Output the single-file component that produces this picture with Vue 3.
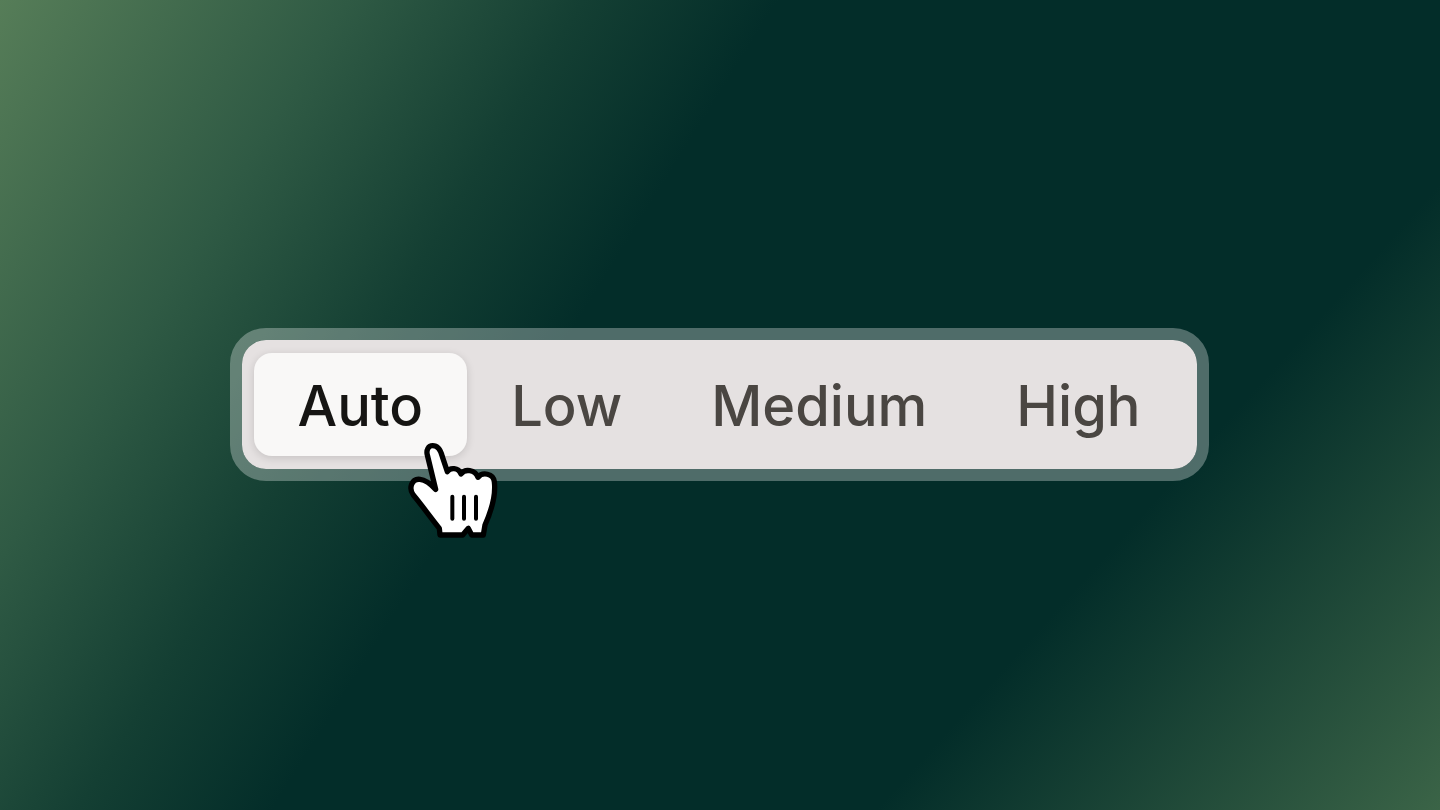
<script setup>
const options = ['Auto', 'Low', 'Medium', 'High']
const active = 'Auto'
</script>

<template>
  <main class="stage">
    <div class="shell">
      <div class="track">
        <button v-for="o in options" :key="o" class="opt" :class="{ on: o === active }">{{ o }}</button>
      </div>
      <svg class="hand" viewBox="0 0 360 345" width="120" height="115">
        <path class="hand-fill" d="M128 47 C145 47 152 60 157 80 L172 125 C180 112 205 112 213 132 C224 116 255 118 264 142 C277 125 310 130 313 155 C318 195 305 240 285 285 L280 315 L245 315 L235 295 L218 315 L150 315 L148 295 C120 260 95 225 70 195 C55 175 65 145 90 148 C110 150 125 165 137 178 L112 75 C108 60 115 47 128 47 Z"/>
        <path class="hand-line" d="M187 200 L187 266 M222 200 L222 266 M258 200 L258 266"/>
      </svg>
    </div>
  </main>
</template>

<style scoped>
.stage {
  width: 1440px;
  height: 810px;
  display: flex;
  align-items: center;
  justify-content: center;
  background:
    linear-gradient(132deg, rgba(59, 100, 71, 0) 74%, rgba(59, 100, 71, 1) 100%),
    linear-gradient(122deg, #567d58 0%, #2f5a44 18%, #143f33 30%, #032d29 40%);
  overflow: hidden;
}
.shell {
  position: relative;
  margin-left: -1px;
  margin-top: -1px;
  border: 12px solid rgba(255, 255, 255, 0.3);
  border-radius: 36px;
  background-clip: padding-box;
}
.track {
  display: flex;
  padding: 13px 12px;
  background: #e5e1e1;
  border-radius: 24px;
}
.opt {
  border: 0;
  background: none;
  padding: 2px 44.5px 0;
  height: 103px;
  font: 500 56px "Inter", sans-serif;
  color: #4a4642;
  border-radius: 18px;
}
.opt.on {
  padding: 2px 43.5px 0;
  color: #161513;
  background: #f9f8f7;
  box-shadow: 0 2px 8px rgba(0, 0, 0, 0.14);
}
.hand {
  position: absolute;
  left: 148px;
  top: 90px;
}
.hand-fill {
  fill: #fff;
  stroke: #000;
  stroke-width: 16;
  stroke-linejoin: round;
}
.hand-line {
  fill: none;
  stroke: #000;
  stroke-width: 12;
  stroke-linecap: round;
}
</style>
